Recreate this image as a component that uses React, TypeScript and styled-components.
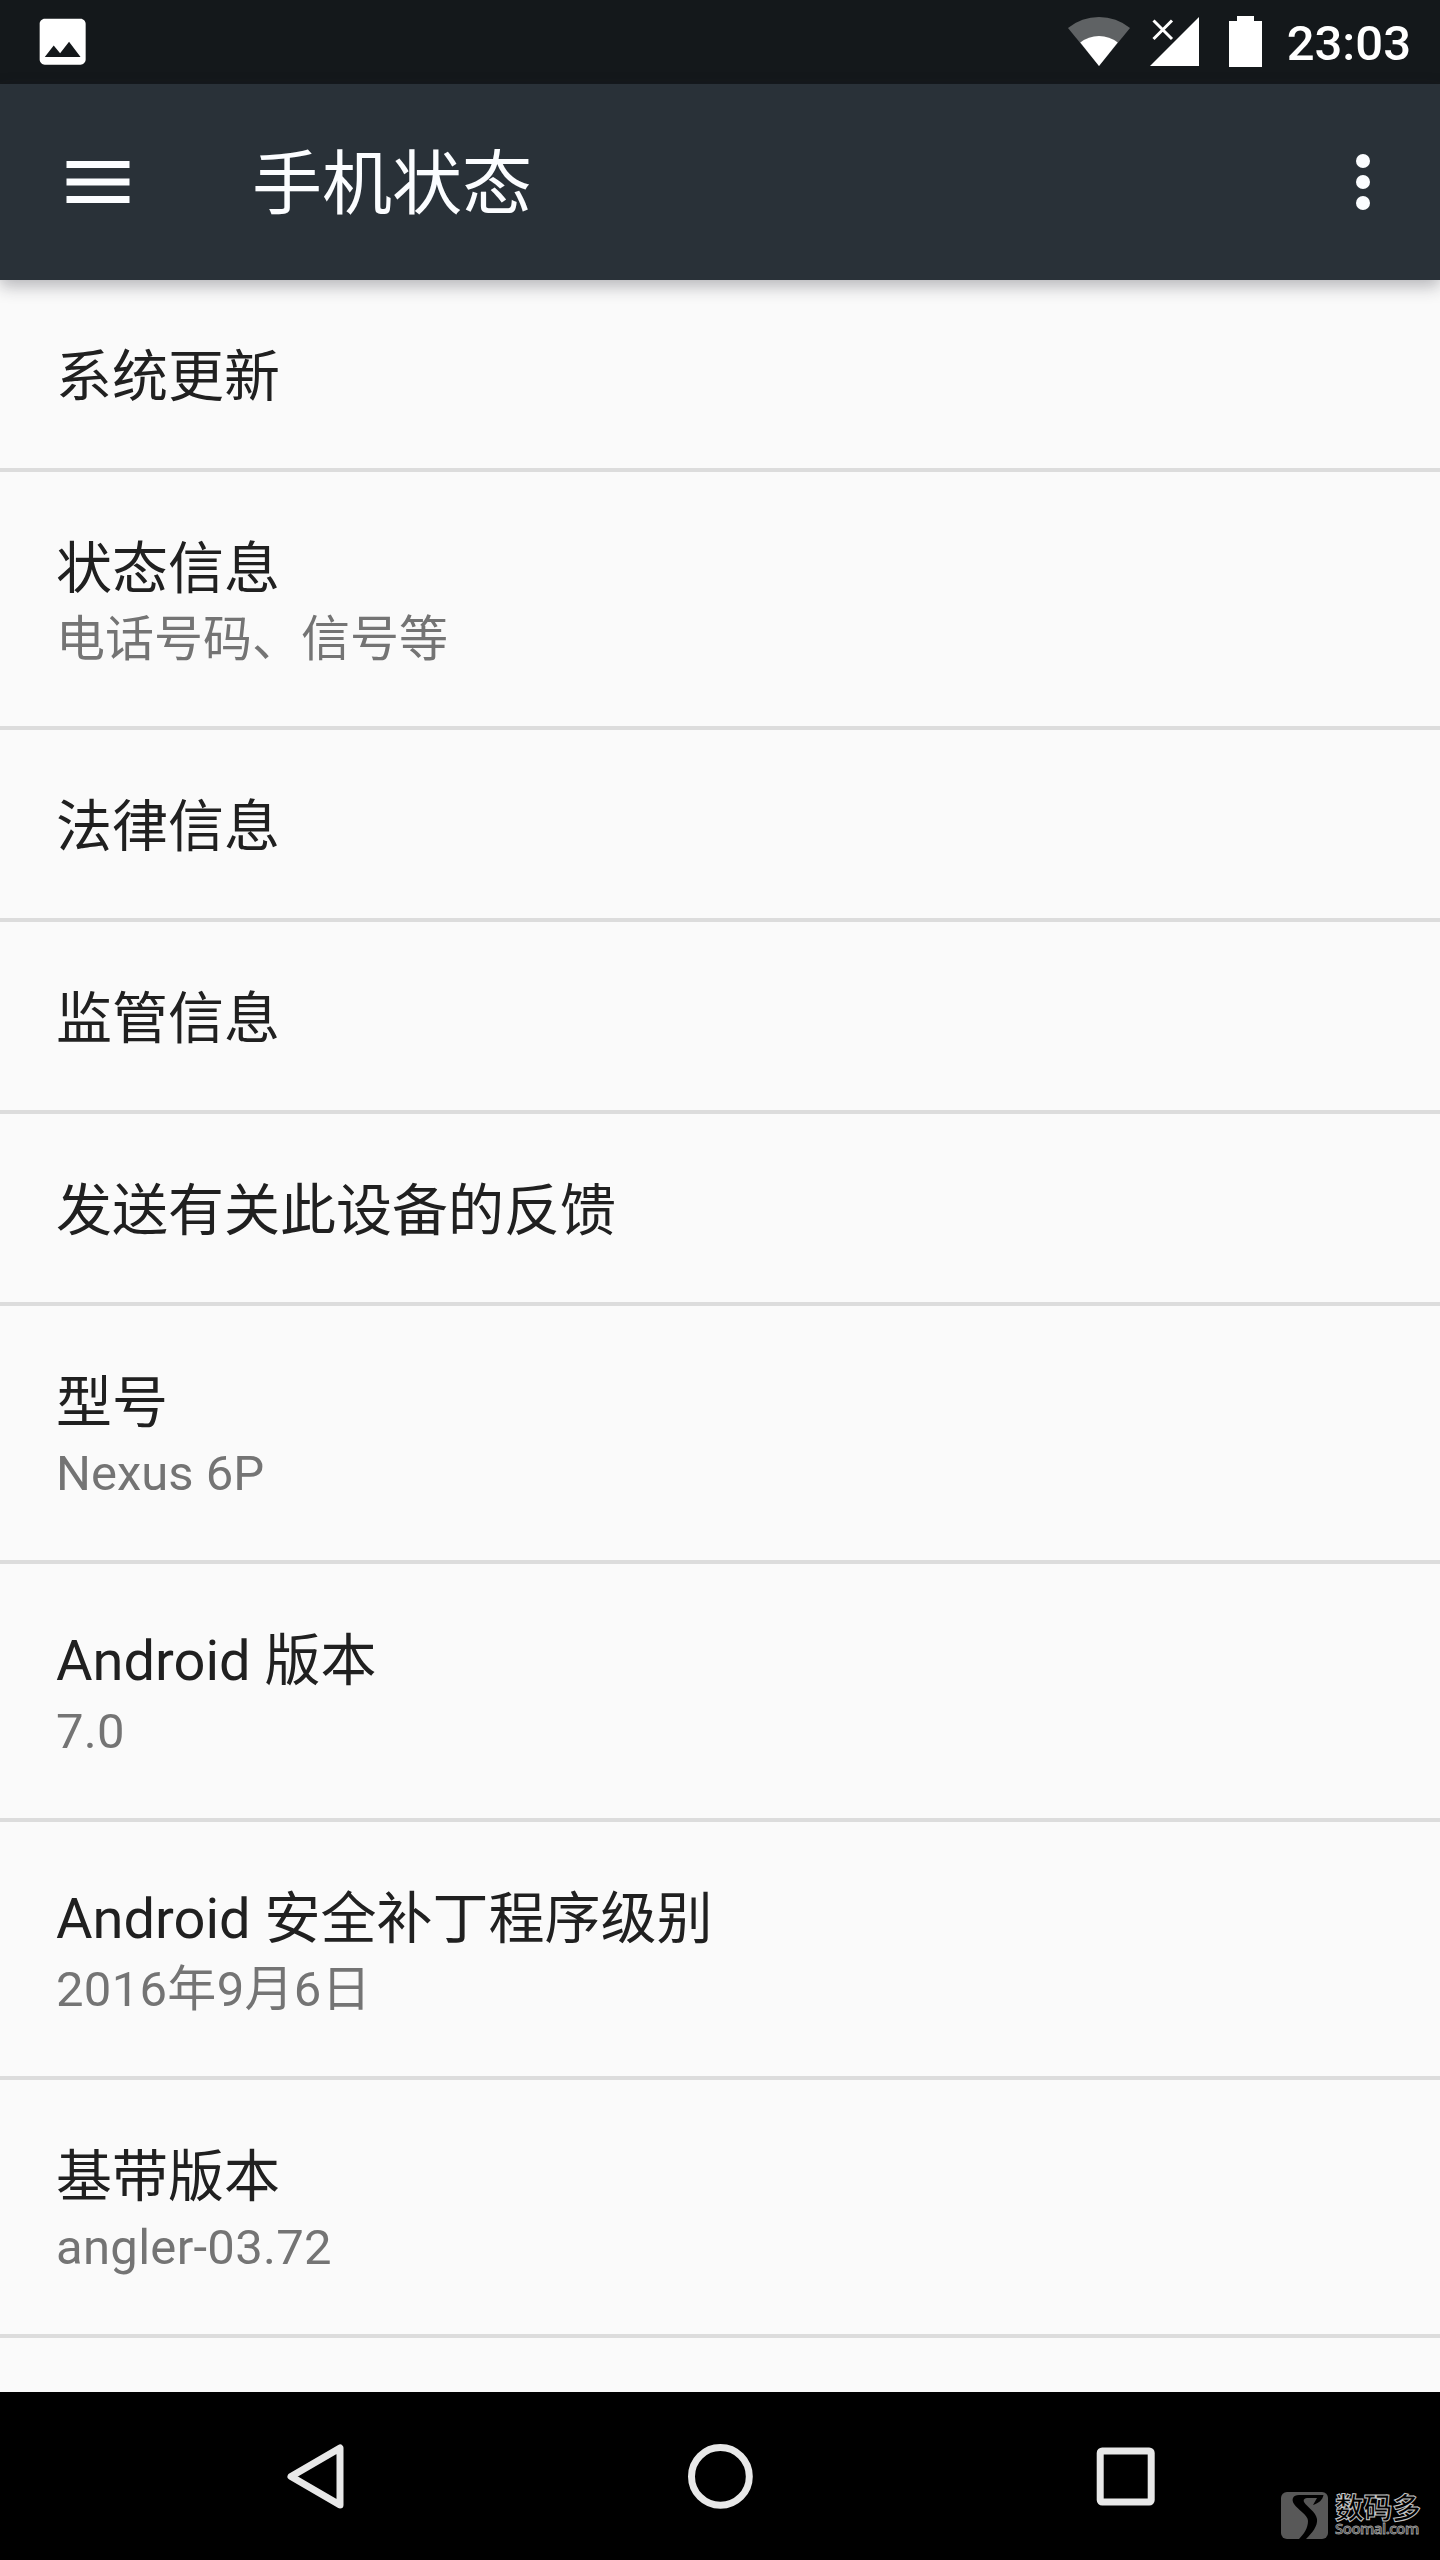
import React from 'react';
import styled, { createGlobalStyle } from 'styled-components';

const GlobalStyle = createGlobalStyle`
  *, *::before, *::after { box-sizing: border-box; }
  html, body { margin: 0; padding: 0; background: #fafafa; }
  body {
    font-family: Roboto, "Noto Sans CJK SC", sans-serif;
    -webkit-font-smoothing: antialiased;
  }
  svg { display: block; flex: none; }
`;

const Screen = styled.div`
  position: relative;
  display: flex;
  flex-direction: column;
  width: 1440px;
  height: 2560px;
  overflow: hidden;
  background: #fafafa;
`;

const StatusBar = styled.header`
  display: flex;
  align-items: center;
  justify-content: space-between;
  flex: none;
  height: 84px;
  padding: 0 29px 0 32px;
  background: #14181b;
  color: #fff;
`;

const StatusIcons = styled.div`
  display: flex;
  align-items: center;
`;

const Clock = styled.span`
  margin-left: 23px;
  font-size: 49px;
  font-weight: 500;
  line-height: 57px;
  padding-top: 3px;
`;

const Toolbar = styled.div`
  position: relative;
  z-index: 1;
  display: flex;
  align-items: center;
  flex: none;
  height: 196px;
  padding: 0 35px 0 56px;
  background: #293138;
  color: #fbfdff;
  box-shadow: 0 6px 16px rgba(30, 30, 45, 0.32);
`;

const IconButton = styled.button`
  display: flex;
  padding: 0;
  border: 0;
  background: none;
  color: inherit;
`;

const ToolbarTitle = styled.h1`
  flex: 1;
  margin: 0 0 0 112px;
  padding-top: 6px;
  font-size: 70px;
  font-weight: 400;
  line-height: 82px;
`;

const List = styled.main`
  flex: 1;
  min-height: 0;
  overflow: hidden;
`;

const Row = styled.div<{ $tall: boolean }>`
  display: flex;
  flex-direction: column;
  gap: 9px;
  height: ${(p) => (p.$tall ? 258 : 192)}px;
  padding: 64px 56px 0;
  border-bottom: 4px solid #dcdcdc;
`;

const RowTitle = styled.div`
  font-size: 56px;
  line-height: 66px;
  color: #202020;
`;

const RowSummary = styled.div<{ $tracking: number }>`
  font-size: 49px;
  line-height: 57px;
  letter-spacing: ${(p) => p.$tracking}px;
  color: #747474;
`;

const NavBar = styled.nav`
  display: flex;
  align-items: center;
  justify-content: center;
  gap: 307px;
  flex: none;
  height: 168px;
  background: #000;
  color: #e8e8e8;
`;

const Watermark = styled.div`
  position: absolute;
  right: 19px;
  bottom: 21px;
  display: flex;
  align-items: center;
  gap: 7px;
`;

const WatermarkText = styled.div`
  display: flex;
  flex-direction: column;
  width: 86px;
  padding-bottom: 3px;
  white-space: nowrap;
`;

const WatermarkName = styled.span`
  font: 700 29px/30px "Noto Sans CJK SC", sans-serif;
  letter-spacing: -0.5px;
  color: #000;
  -webkit-text-stroke: 1px #c4c4c4;
`;

const WatermarkSite = styled.span`
  font: 600 15px/15px "Open Sans", sans-serif;
  letter-spacing: -0.5px;
  color: #303030;
  -webkit-text-stroke: 0.8px #a0a0a0;
`;

const PictureIcon = () => (
  <svg width="61.33" height="61.33" viewBox="0 0 24 24" fill="currentColor">
    <path d="M21 19V5c0-1.1-.9-2-2-2H5c-1.100 0-2 .9-2 2v14c0 1.100.9 2 2 2h14c1.100 0 2-.9 2-2zM8.500 13.500l2.500 3.010L14.500 12l4.500 6H5l3.500-4.500z" />
  </svg>
);

const RadioIcons = () => (
  <svg width="196" height="84" viewBox="1068 0 196 84" fill="currentColor">
    <path d="M1099 66 1068 28A49 49 0 0 1 1130 28Z" opacity=".32" />
    <path d="M1099 66 1080.300 42.500A30 30 0 0 1 1117.700 42.500Z" />
    <path d="M1150 66H1199V17Z" />
    <path d="M1153.500 20.500 1172 39M1172 20.500 1153.500 39" fill="none" stroke="currentColor" strokeWidth="3" />
    <path d="M1229 21H1237V16H1254V21H1262V67H1229Z" />
  </svg>
);

const MenuIcon = () => (
  <svg width="84" height="84" viewBox="0 0 24 24" fill="currentColor">
    <path d="M3 18h18v-2H3v2zm0-5h18v-2H3v2zm0-7v2h18V6H3z" />
  </svg>
);

const MoreIcon = () => (
  <svg width="84" height="84" viewBox="0 0 24 24" fill="currentColor">
    <circle cx="12" cy="6" r="2" />
    <circle cx="12" cy="12" r="2" />
    <circle cx="12" cy="18" r="2" />
  </svg>
);

const BackIcon = () => (
  <svg width="98" height="98" viewBox="266 2427 98 98" fill="none" stroke="currentColor">
    <path d="M340 2448V2505L291 2476.500Z" strokeWidth="7" strokeLinejoin="round" />
  </svg>
);

const HomeIcon = () => (
  <svg width="98" height="98" viewBox="671 2427 98 98" fill="none" stroke="currentColor">
    <circle cx="720.400" cy="2476.400" r="28.900" strokeWidth="7" />
  </svg>
);

const RecentsIcon = () => (
  <svg width="98" height="98" viewBox="1076 2427 98 98" fill="none" stroke="currentColor">
    <rect x="1100.200" y="2451" width="51" height="51" rx="2" strokeWidth="7" />
  </svg>
);

const SoomalLogo = () => (
  <svg width="47" height="47" viewBox="0 0 47 47">
    <rect width="47" height="47" rx="6" fill="#585858" />
    <path
      d="M42.500 3H18C12 3 10 7 13 12C17 18 27 23 27 29C27 36 23 42 18 47H25C31 41 37 34 36 27C35 20 26 15 23 10C22 7 24 6 27 6H36L32 13C38 11 41.500 8 42.500 3Z"
      fill="#000"
    />
  </svg>
);

interface Item {
  title: string;
  summary?: string;
  tracking?: number;
}

const items: Item[] = [
  { title: '系统更新' },
  { title: '状态信息', summary: '电话号码、信号等' },
  { title: '法律信息' },
  { title: '监管信息' },
  { title: '发送有关此设备的反馈' },
  { title: '型号', summary: 'Nexus 6P' },
  { title: 'Android 版本', summary: '7.0', tracking: 0.25 },
  { title: 'Android 安全补丁程序级别', summary: '2016年9月6日', tracking: 0.3 },
  { title: '基带版本', summary: 'angler-03.72', tracking: 0.3 },
];

export default function App() {
  return (
    <>
      <GlobalStyle />
      <Screen lang="zh-CN">
        <StatusBar>
          <PictureIcon />
          <StatusIcons>
            <RadioIcons />
            <Clock>23:03</Clock>
          </StatusIcons>
        </StatusBar>
        <Toolbar>
          <IconButton aria-label="菜单">
            <MenuIcon />
          </IconButton>
          <ToolbarTitle>手机状态</ToolbarTitle>
          <IconButton aria-label="更多">
            <MoreIcon />
          </IconButton>
        </Toolbar>
        <List>
          {items.map((item) => (
            <Row key={item.title} $tall={Boolean(item.summary)}>
              <RowTitle>{item.title}</RowTitle>
              {item.summary && <RowSummary $tracking={item.tracking ?? 0}>{item.summary}</RowSummary>}
            </Row>
          ))}
        </List>
        <NavBar>
          <BackIcon />
          <HomeIcon />
          <RecentsIcon />
        </NavBar>
        <Watermark>
          <SoomalLogo />
          <WatermarkText>
            <WatermarkName>数码多</WatermarkName>
            <WatermarkSite>Soomal.com</WatermarkSite>
          </WatermarkText>
        </Watermark>
      </Screen>
    </>
  );
}
